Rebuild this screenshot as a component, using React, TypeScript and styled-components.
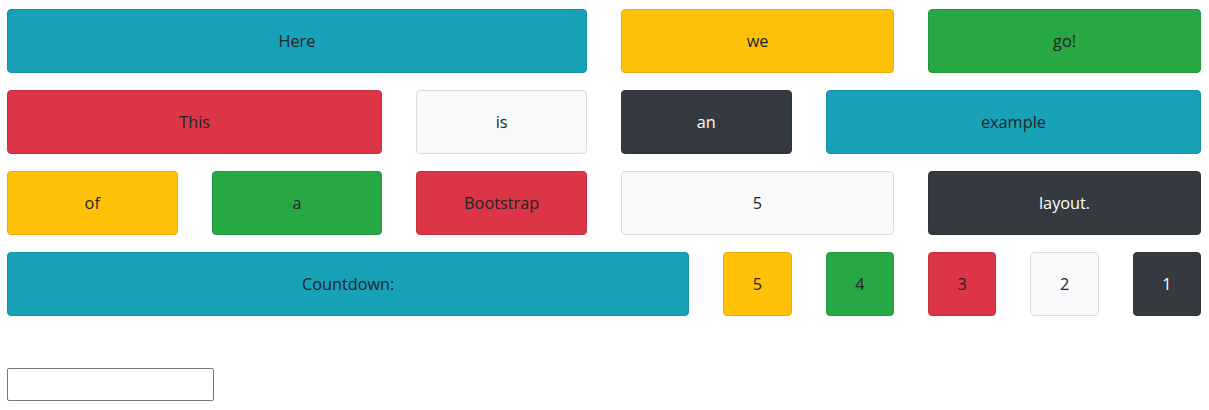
import React from "react";
import styled, { createGlobalStyle } from "styled-components";

const Global = createGlobalStyle`
  html, body { margin: 0; padding: 0; background: #fff; }
  body { font-family: "Open Sans", "Noto Sans", sans-serif; color: #212529; }
`;

const Page = styled.div`
  padding: 9px 8px 0 7px;
  width: 1194px;
`;

const Grid = styled.div`
  display: grid;
  grid-template-columns: repeat(12, 1fr);
  column-gap: 34.2px;
  row-gap: 17px;
`;

type Variant = "info" | "warning" | "success" | "danger" | "light" | "dark";

const palette: Record<Variant, { bg: string; border: string; fg: string }> = {
  info: { bg: "#17a2b8", border: "#1590a3", fg: "#212529" },
  warning: { bg: "#ffc107", border: "#e8b008", fg: "#212529" },
  success: { bg: "#28a745", border: "#24973e", fg: "#212529" },
  danger: { bg: "#dc3545", border: "#c8303f", fg: "#212529" },
  light: { bg: "#f8f9fa", border: "#dadde0", fg: "#212529" },
  dark: { bg: "#343a40", border: "#2f353a", fg: "#ffffff" },
};

const Cell = styled.div<{ $span: number; $variant: Variant }>`
  grid-column: span ${(p) => p.$span};
  box-sizing: border-box;
  height: 64px;
  display: flex;
  align-items: center;
  justify-content: center;
  background: ${(p) => palette[p.$variant].bg};
  border: 1px solid ${(p) => palette[p.$variant].border};
  color: ${(p) => palette[p.$variant].fg};
  border-radius: 4px;
  font-size: 16.3px;
`;

const Field = styled.input`
  display: block;
  box-sizing: border-box;
  margin-top: 52px;
  width: 207px;
  height: 33px;
  border: 1px solid #767676;
  border-radius: 2px;
  background: #fff;
  padding: 0 4px;
`;

const cells: [string, number, Variant][] = [
  ["Here", 6, "info"],
  ["we", 3, "warning"],
  ["go!", 3, "success"],
  ["This", 4, "danger"],
  ["is", 2, "light"],
  ["an", 2, "dark"],
  ["example", 4, "info"],
  ["of", 2, "warning"],
  ["a", 2, "success"],
  ["Bootstrap", 2, "danger"],
  ["5", 3, "light"],
  ["layout.", 3, "dark"],
  ["Countdown:", 7, "info"],
  ["5", 1, "warning"],
  ["4", 1, "success"],
  ["3", 1, "danger"],
  ["2", 1, "light"],
  ["1", 1, "dark"],
];

export default function App() {
  return (
    <Page>
      <Global />
      <Grid>
        {cells.map(([t, s, v], i) => (
          <Cell key={i} $span={s} $variant={v}>
            {t}
          </Cell>
        ))}
      </Grid>
      <Field type="text" />
    </Page>
  );
}
